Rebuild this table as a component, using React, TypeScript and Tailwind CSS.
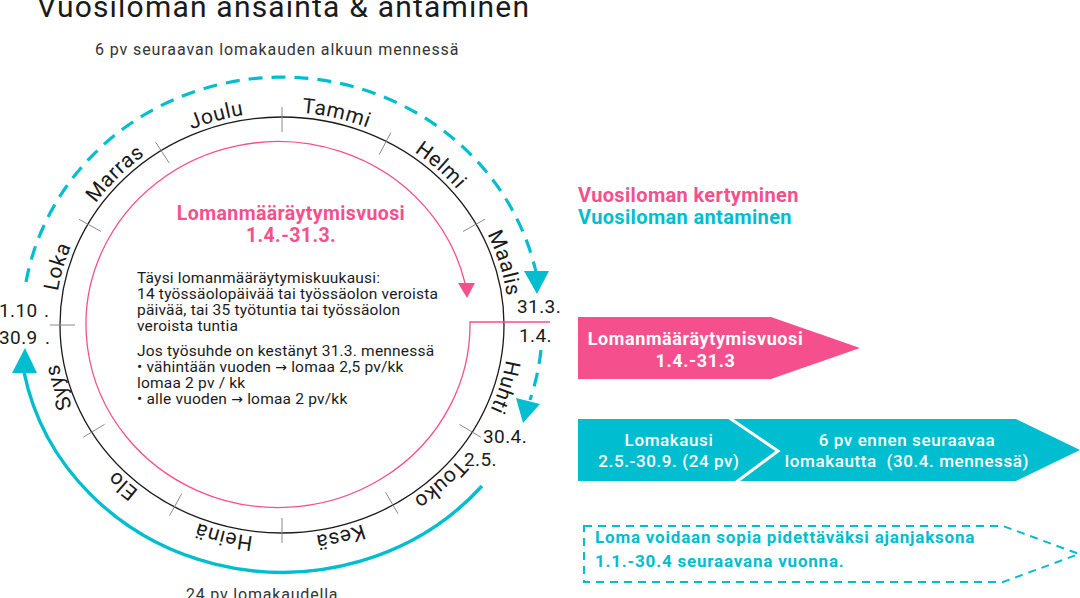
const PINK = "#f5508d"
const TEAL = "#00bdd0"

const CX = 282
const CY = 325
const RX = 222
const RY = 208

const ticks = [0, 28, 61, 121, 150, 180, 209, 239, 270, 299, 327]

const months: [string, number][] = [
  ["Tammi", 14],
  ["Helmi", 44],
  ["Maalis", 74],
  ["Huhti", 106],
  ["Touko", 136],
  ["Kesä", 165],
  ["Heinä", 195],
  ["Elo", 224],
  ["Syys", 254],
  ["Loka", 285],
  ["Marras", 313],
  ["Joulu", 343],
]

function pt(deg: number, d: number) {
  const a = (deg * Math.PI) / 180
  return [CX + (RX + d) * Math.sin(a), CY - (RY + d) * Math.cos(a)]
}

function Arrow() {
  return <tspan fontFamily="DejaVu Sans" fontSize="14" dy="0">→</tspan>
}

function YearWheel() {
  const lr = RX + 5
  const lry = RY + 5
  const monthPath = `M ${CX} ${CY - lry} A ${lr} ${lry} 0 1 1 ${CX} ${CY + lry} A ${lr} ${lry} 0 1 1 ${CX} ${CY - lry}`

  return (
    <svg width="578" height="540" viewBox="0 58 578 540" className="block">
      <defs>
        <path id="mp" d={monthPath} fill="none" />
      </defs>

      {/* antaminen, dashed */}
      <path d="M 26 282 A 260 248 0 0 1 536 272" fill="none" stroke={TEAL} strokeWidth="3.2" strokeDasharray="14 9" />
      <polygon points="524,271 549,271 537,294" fill={TEAL} />
      <path d="M 541 350 A 260 248 0 0 1 530 400" fill="none" stroke={TEAL} strokeWidth="3.2" strokeDasharray="14 9" />
      <polygon points="516,398 540,404 523,423" fill={TEAL} />

      {/* lomakausi, solid */}
      <path d="M 482 486 A 263 247 0 0 1 24 372" fill="none" stroke={TEAL} strokeWidth="3.4" />
      <polygon points="12,373 37,373 25,348" fill={TEAL} />

      {/* year ring */}
      <ellipse cx={CX} cy={CY} rx={RX} ry={RY} fill="none" stroke="#1a1a1a" strokeWidth="1.3" />
      {ticks.map((t) => {
        const [x1, y1] = pt(t, -15)
        const [x2, y2] = pt(t, 10)
        return <line key={t} x1={x1} y1={y1} x2={x2} y2={y2} stroke="#8a8a8a" strokeWidth="1" />
      })}

      {/* lomanmääräytymisvuosi */}
      <path d="M 550 322 L 470 322 A 192 183 0 1 1 465 283" fill="none" stroke={PINK} strokeWidth="1.3" />
      <polygon points="458,283 475,283 467,298" fill={PINK} />

      <g fill="#1a1a1a" fontSize="21" letterSpacing="0.6">
        {months.map(([m, a]) => (
          <text key={m}>
            <textPath href="#mp" startOffset={`${(a / 360) * 100}%`} textAnchor="middle">
              {m}
            </textPath>
          </text>
        ))}
      </g>

      <g fill="#1a1a1a" fontSize="19" letterSpacing="0.4">
        <text x="517" y="313">31.3.</text>
        <text x="519" y="342">1.4.</text>
        <text x="483" y="443">30.4.</text>
        <text x="464" y="466">2.5.</text>
        <text x="-1" y="317">1.10</text>
        <text x="44" y="317">.</text>
        <text x="-1" y="344">30.9</text>
        <text x="45" y="344">.</text>
      </g>

      <g fill={PINK} fontSize="19.5" fontWeight="700" textAnchor="middle" letterSpacing="0.4">
        <text x="291" y="220">Lomanmääräytymisvuosi</text>
        <text x="291" y="242">1.4.-31.3.</text>
      </g>

      <g fill="#1a1a1a" fontSize="15.5" letterSpacing="0.2">
        <text x="137" y="283">Täysi lomanmääräytymiskuukausi:</text>
        <text x="137" y="299">14 työssäolopäivää tai työssäolon veroista</text>
        <text x="137" y="315">päivää, tai 35 työtuntia tai työssäolon</text>
        <text x="137" y="331">veroista tuntia</text>
        <text x="137" y="356">Jos työsuhde on kestänyt 31.3. mennessä</text>
        <text x="137" y="372">
          • vähintään vuoden <Arrow /> lomaa 2,5 pv/kk
        </text>
        <text x="137" y="388">lomaa 2 pv / kk</text>
        <text x="137" y="404">
          • alle vuoden <Arrow /> lomaa 2 pv/kk
        </text>
      </g>

      <text x="186" y="600" fill="#333" fontSize="16" letterSpacing="0.8">
        24 pv lomakaudella
      </text>
    </svg>
  )
}

export default function App() {
  return (
    <div className="w-[1080px] h-[598px] overflow-hidden bg-white flex font-['Roboto',sans-serif] text-[#1a1a1a]">
      <div className="w-[578px] shrink-0 flex flex-col">
        <h1 className="mt-[-8px] pl-[37px] text-[30px] leading-[30px] font-normal tracking-[1.2px] whitespace-nowrap">
          Vuosiloman ansainta &amp; antaminen
        </h1>
        <p className="mt-[20px] pl-[95px] text-[16px] leading-[16px] tracking-[0.9px] text-[#333] whitespace-nowrap">
          6 pv seuraavan lomakauden alkuun mennessä
        </p>
        <YearWheel />
      </div>

      <div className="flex-1 flex flex-col pt-[184px]">
        <div className="text-[20px] leading-[22px] font-bold tracking-[0.35px]">
          <div className="text-[#f5508d]">Vuosiloman kertyminen</div>
          <div className="text-[#00bdd0]">Vuosiloman antaminen</div>
        </div>

        <div className="mt-[89px] w-[282px] h-[62px] bg-[#f5508d] [clip-path:polygon(0_0,193px_0,100%_50%,193px_100%,0_100%)]">
          <div className="w-[235px] pt-[11px] text-center text-white font-bold text-[18px] leading-[22px] tracking-[0.6px] whitespace-nowrap">
            <div>Lomanmääräytymisvuosi</div>
            <div>1.4.-31.3</div>
          </div>
        </div>

        <div className="relative mt-[40px] w-[502px] h-[62px]">
          <div className="flex h-full bg-[#00bdd0] text-white font-medium text-[17px] leading-[21px] tracking-[0.6px] [clip-path:polygon(0_0,438px_0,100%_50%,438px_100%,0_100%)]">
            <div className="w-[182px] pt-[11px] text-center whitespace-nowrap">
              <div>Lomakausi</div>
              <div>2.5.-30.9. (24 pv)</div>
            </div>
            <div className="w-[294px] pt-[11px] text-center whitespace-pre">
              <div>6 pv ennen seuraavaa</div>
              <div>lomakautta  (30.4. mennessä)</div>
            </div>
          </div>
          <svg className="absolute left-0 top-0" width="502" height="62">
            <polyline points="150,-2 200,32 157,64" fill="none" stroke="white" strokeWidth="3" />
          </svg>
        </div>

        <div className="relative mt-[44px] ml-[5px] w-[497px] h-[58px]">
          <svg className="absolute left-0 top-0" width="497" height="58">
            <polygon
              points="1,1 420,1 496,29 420,57 1,57"
              fill="none"
              stroke="#00bdd0"
              strokeWidth="2"
              strokeDasharray="8 6"
            />
          </svg>
          <div className="relative pl-[12px] text-[17px] leading-[24px] font-bold tracking-[0.8px] text-[#00bdd0] whitespace-nowrap">
            <div>Loma voidaan sopia pidettäväksi ajanjaksona</div>
            <div>1.1.-30.4 seuraavana vuonna.</div>
          </div>
        </div>
      </div>
    </div>
  )
}
